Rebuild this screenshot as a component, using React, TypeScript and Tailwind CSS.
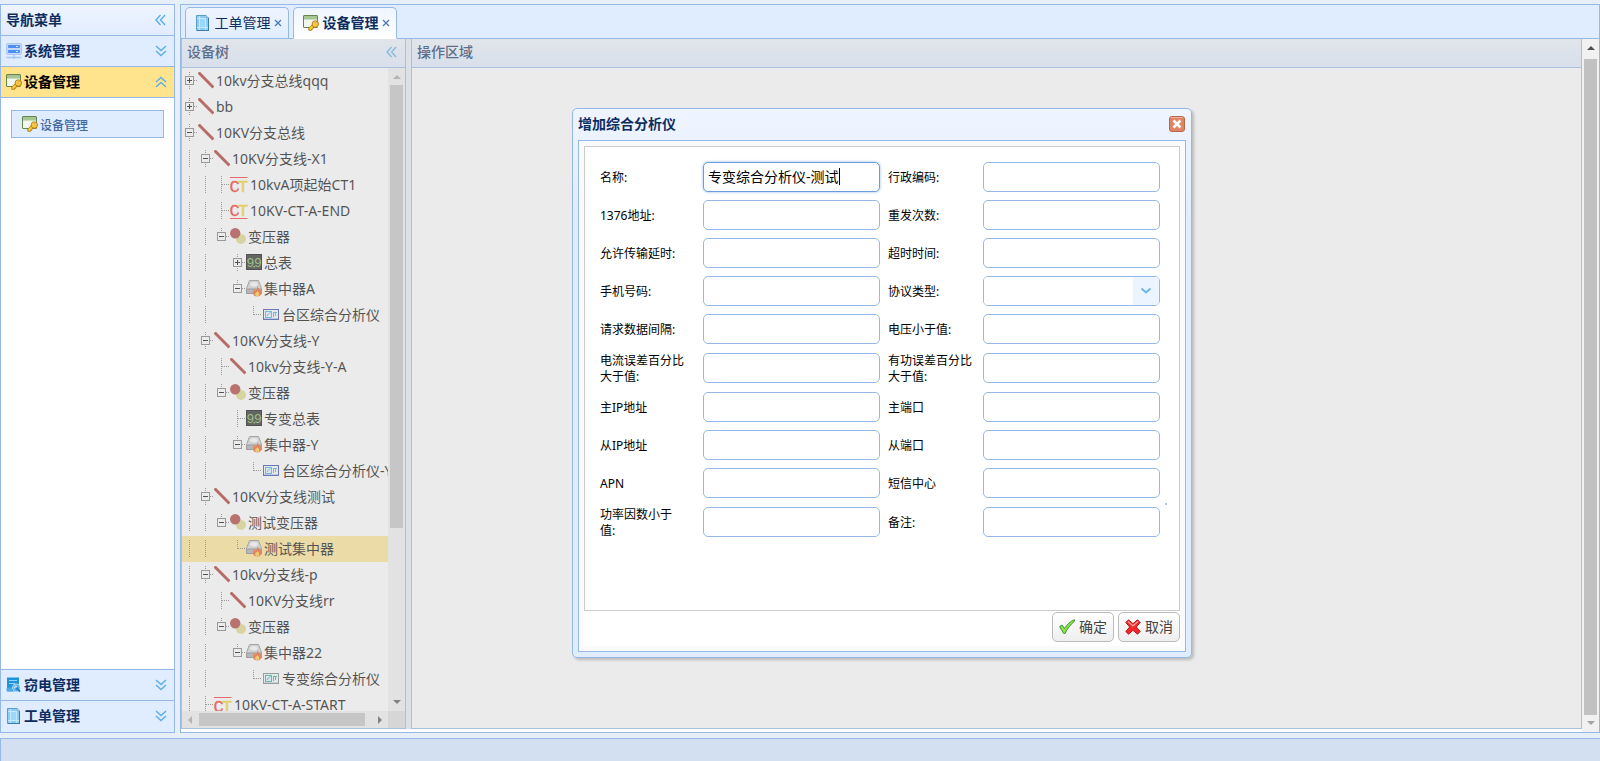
import { Fragment, type ReactNode } from "react"

type IconName = "line" | "ctTop" | "ctBottom" | "transformer" | "meter" | "drive" | "analyzer" | "analyzerGreen"

// guides: one char per 16px column
//   | vertical guide, . blank, + / - toggle that continues, P / M toggle that ends the branch,
//   t leaf with siblings below, l last leaf
type TreeRow = {
  guides: string
  icon: IconName
  text: string
  selected?: boolean
}

const treeRows: TreeRow[] = [
  { guides: "+", icon: "line", text: "10kv分支总线qqq" },
  { guides: "+", icon: "line", text: "bb" },
  { guides: "-", icon: "line", text: "10KV分支总线" },
  { guides: "|-", icon: "line", text: "10KV分支线-X1" },
  { guides: "||t", icon: "ctTop", text: "10kvA项起始CT1" },
  { guides: "||t", icon: "ctBottom", text: "10KV-CT-A-END" },
  { guides: "||M", icon: "transformer", text: "变压器" },
  { guides: "||.+", icon: "meter", text: "总表" },
  { guides: "||.M", icon: "drive", text: "集中器A" },
  { guides: "||..l", icon: "analyzer", text: "台区综合分析仪" },
  { guides: "|-", icon: "line", text: "10KV分支线-Y" },
  { guides: "||t", icon: "line", text: "10kv分支线-Y-A" },
  { guides: "||M", icon: "transformer", text: "变压器" },
  { guides: "||.t", icon: "meter", text: "专变总表" },
  { guides: "||.M", icon: "drive", text: "集中器-Y" },
  { guides: "||..l", icon: "analyzer", text: "台区综合分析仪-Y" },
  { guides: "|-", icon: "line", text: "10KV分支线测试" },
  { guides: "||M", icon: "transformer", text: "测试变压器" },
  { guides: "||.l", icon: "drive", text: "测试集中器", selected: true },
  { guides: "|-", icon: "line", text: "10kv分支线-p" },
  { guides: "||t", icon: "line", text: "10KV分支线rr" },
  { guides: "||M", icon: "transformer", text: "变压器" },
  { guides: "||.M", icon: "drive", text: "集中器22" },
  { guides: "||..l", icon: "analyzerGreen", text: "专变综合分析仪" },
  { guides: "|t", icon: "ctTop", text: "10KV-CT-A-START" },
]

type Field = { id: string; label: string; value?: string; select?: boolean }

const fields: [Field, Field][] = [
  [{ id: "name", label: "名称:", value: "专变综合分析仪-测试" }, { id: "areaCode", label: "行政编码:" }],
  [{ id: "addr1376", label: "1376地址:" }, { id: "resend", label: "重发次数:" }],
  [{ id: "delay", label: "允许传输延时:" }, { id: "timeout", label: "超时时间:" }],
  [{ id: "phone", label: "手机号码:" }, { id: "protocol", label: "协议类型:", select: true }],
  [{ id: "interval", label: "请求数据间隔:" }, { id: "voltage", label: "电压小于值:" }],
  [{ id: "current", label: "电流误差百分比大于值:" }, { id: "active", label: "有功误差百分比大于值:" }],
  [{ id: "mainIp", label: "主IP地址" }, { id: "mainPort", label: "主端口" }],
  [{ id: "subIp", label: "从IP地址" }, { id: "subPort", label: "从端口" }],
  [{ id: "apn", label: "APN" }, { id: "sms", label: "短信中心" }],
  [{ id: "factor", label: "功率因数小于值:" }, { id: "remark", label: "备注:" }],
]

const WindowKeyIcon = () => (
  <svg width="16" height="16" viewBox="0 0 16 16" className="shrink-0">
    <rect x="0.5" y="0.5" width="14" height="12" rx="0.5" fill="#f1f7ee" stroke="#64864c" />
    <rect x="1" y="1" width="13" height="3" fill="#a5c693" />
    <rect x="1" y="4" width="13" height="1" fill="#c9dfbc" />
    <path d="M10 9 5.800 13v2.300h2.700V14.200h1.400v-1.500l1.800-1" fill="#f8c93c" stroke="#b87d14" strokeWidth="0.9" />
    <circle cx="12.300" cy="9" r="3.200" fill="#fbc83c" stroke="#b87d14" strokeWidth="0.9" />
    <circle cx="13.200" cy="8.200" r="1" fill="#fff" stroke="#b87d14" strokeWidth="0.5" />
  </svg>
)

const DocIcon = () => (
  <svg width="16" height="16" viewBox="0 0 16 16" className="shrink-0">
    <path d="M1.500 0.500h9.500l2.500 2.500v12.500h-12z" fill="#8ccdf6" stroke="#5a9cc9" />
    <path d="M4.500 1v14M10.500 1v14M2 3.500h11M2 12.500h11" stroke="#c4e9fe" fill="none" />
    <path d="M5 4h5v8H5z" fill="#9ad8fb" />
    <path d="M2 15.500h12M13.500 3v12.500" stroke="#3d7ba8" />
    <path d="M11 0.500V3h2.500" fill="#dff3ff" stroke="#4a8dbc" strokeWidth="0.8" />
  </svg>
)

const ServerIcon = () => (
  <svg width="16" height="16" viewBox="0 0 16 16" className="shrink-0">
    <rect x="0.500" y="0.500" width="15" height="11" rx="1.500" fill="#c3d8fb" stroke="#abc8f7" />
    <rect x="2" y="2" width="12" height="3" rx="1" fill="#4c8ff5" />
    <rect x="2" y="7" width="12" height="3" rx="1" fill="#4c8ff5" />
    <path d="M10 3.500h2M10 8.500h2" stroke="#d9e8ff" />
    <path d="M8 12v4M0.500 14.500h15" stroke="#a3c5f7" strokeWidth="1.500" />
  </svg>
)

const InspectIcon = () => (
  <svg width="16" height="16" viewBox="0 0 16 16" className="shrink-0">
    <path d="M1 0.500h12v7.500l-4 6.500H1z" fill="#1f93dc" />
    <path d="M3 3.500h8M3 6.500h6" stroke="#9ad2f5" strokeWidth="1.200" />
    <path d="M0.500 10.500h6l-1 3.500h-5z" fill="#4aaae4" />
    <circle cx="10.300" cy="10.800" r="3.900" fill="#4fabe4" stroke="#d4e9fa" strokeWidth="0.800" />
    <path d="m10.500 11 3.500 3.500" stroke="#1f84cc" strokeWidth="2" />
    <path d="M8.300 11.500a2 2 0 0 1 2-2.500l-.5 1.500" stroke="#fff" fill="none" />
  </svg>
)

const Chevrons = ({ dir }: { dir: "left" | "up" | "down" }) => {
  const paths = {
    left: "M7.500 3 3 8l4.500 5M12 3 7.500 8l4.500 5",
    up: "M3 8l5-4.500L13 8M3 13l5-4.500L13 13",
    down: "M3 3l5 4.500L13 3M3 8l5 4.500L13 8",
  }
  return (
    <svg width="16" height="16" viewBox="0 0 16 16" fill="none" stroke="#5aaeea" strokeWidth="1.400" className="shrink-0">
      <path d={paths[dir]} />
    </svg>
  )
}

const Guide = ({ kind }: { kind: string }) => {
  const toggle = "+-PM".includes(kind)
  const svg = (
    <svg width="16" height="18" viewBox="0 0 16 18" shapeRendering="crispEdges" className="block">
      {kind !== "." && (
        <path
          d={"MPl".includes(kind) ? "M7.500 0v9" : "M7.500 0v18"}
          stroke="#777"
          strokeDasharray="1 1"
        />
      )}
      {kind !== "|" && kind !== "." && <path d="M8 8.500h8" stroke="#777" strokeDasharray="1 1" />}
      {toggle && (
        <>
          <rect x="3.500" y="4.500" width="8" height="8" fill="#fff" stroke="#777" />
          <path d="M5 8.500h5" stroke="#000" />
          {"+P".includes(kind) && <path d="M7.500 6v5" stroke="#000" />}
        </>
      )}
    </svg>
  )
  return toggle ? (
    <button type="button" aria-label="展开或折叠" className="mt-1 h-[18px] w-4 shrink-0">{svg}</button>
  ) : (
    <span className="mt-1 h-[18px] w-4 shrink-0">{svg}</span>
  )
}

const Ct = ({ bottom }: { bottom?: boolean }) => (
  <svg width="18" height="18" viewBox="0 0 18 18" className="mt-1 shrink-0 overflow-visible">
    <path d={bottom ? "M0 16.500h17.500" : "M0 1.500h17.500"} stroke="#f52a2a" />
    <text x="-0.500" y={bottom ? 14 : 16} fontSize="17" fontFamily="Liberation Mono" fill="#f51f1f" stroke="#f51f1f" strokeWidth="0.300">C</text>
    <text x="8" y={bottom ? 14 : 16} fontSize="17" fontFamily="Liberation Mono" fill="#f0d41a" stroke="#f0d41a" strokeWidth="0.600">T</text>
  </svg>
)

const Analyzer = ({ frame, ink }: { frame: string; ink: string }) => (
  <svg width="18" height="18" viewBox="0 0 18 18" className="mt-1 shrink-0">
    <rect x="1.500" y="3.500" width="15" height="10" fill="#f4fbff" stroke={frame} />
    <path d="M2 13h14" stroke={frame} strokeOpacity="0.600" />
    <rect x="3.500" y="5.500" width="6" height="6" fill="#e6f6fd" stroke={ink} />
    <path d="m5 10 1.500-2 2-1.500" stroke={ink} fill="none" />
    <path d="M11.500 6v5M13.500 6v4M11 6.500h4" stroke={ink} />
  </svg>
)

const NodeIcon = ({ name }: { name: IconName }) => {
  switch (name) {
    case "ctTop":
      return <Ct />
    case "ctBottom":
      return <Ct bottom />
    case "analyzer":
      return <Analyzer frame="#2c3fae" ink="#35b0dd" />
    case "analyzerGreen":
      return <Analyzer frame="#6f8080" ink="#1fb08e" />
    case "line":
      return (
        <svg width="16" height="18" viewBox="0 0 16 18" className="mt-1 shrink-0">
          <path d="M0.500 0.500 15.500 15.500" stroke="#a82c26" strokeWidth="3" />
        </svg>
      )
    case "transformer":
      return (
        <svg width="16" height="18" viewBox="0 0 16 18" className="mt-1 shrink-0">
          <circle cx="11" cy="11" r="5" fill="#e0d984" />
          <circle cx="5.200" cy="5.200" r="5.200" fill="#ab3833" />
        </svg>
      )
    case "meter":
      return (
        <svg width="16" height="18" viewBox="0 0 16 18" className="mt-1 shrink-0">
          <rect x="0.500" y="0.500" width="15" height="15" fill="#1d211d" stroke="#000" />
          <text x="0.500" y="13" fontSize="13" fontFamily="Liberation Mono" fill="#7fb558">9</text>
          <text x="8" y="13" fontSize="13" fontFamily="Liberation Mono" fill="#7fb558">9</text>
          <rect x="7.500" y="12" width="1.500" height="1.500" fill="#7fb558" />
        </svg>
      )
    case "drive":
      return (
        <svg width="16" height="18" viewBox="0 0 16 18" className="mt-1 shrink-0">
          <path d="M3.500 0.500h9l3 8v5h-15v-5z" fill="#d6d6d6" stroke="#8c8c8c" />
          <ellipse cx="8" cy="4.300" rx="4.200" ry="2.700" fill="#fafafa" stroke="#bcbcbc" strokeWidth="0.600" />
          <path d="M0.500 9h15v4.500h-15z" fill="#a9a9a9" stroke="#7d7d7d" />
          <path d="M11.500 5.500c0 3 4 4 4 7.500 0 2.300-2 3.500-4.200 3.500S7 15.200 7 13c0-1.800 1-2.600 1.400-4 .8.500 1.200 1.200 1.300 2 1-1.500 1.600-3 1.800-5.500z" fill="#f0560f" />
          <path d="M11.500 10.500c.3 1.500 1.800 2 1.800 3.700 0 1.200-.9 2-2 2s-2.200-.8-2.200-2c0-.9.600-1.400 1-2 .9.200 1.300-.7 1.400-1.700z" fill="#ffc73a" />
        </svg>
      )
  }
}

const NavHeader = ({ icon, children, active, last }: { icon: ReactNode; children: ReactNode; active?: boolean; last?: boolean }) => (
  <button
    type="button"
    className={`flex w-full shrink-0 items-center gap-0.5 px-[5px] text-sm font-bold ${
      last ? "h-[30px]" : "h-[31px] border-b border-[#95b8e7]"
    } ${active ? "bg-[#ffe48d] text-black" : "bg-[#e0ecff] text-[#0e2d5f]"}`}
  >
    {icon}
    <span className="flex-1 text-left">{children}</span>
    <Chevrons dir={active ? "up" : "down"} />
  </button>
)

const Sidebar = () => (
  <nav className="flex w-[175px] shrink-0 flex-col border border-[#95b8e7] bg-[#e0ecff]">
    <div className="flex h-[31px] shrink-0 items-center justify-between border-b border-[#95b8e7] bg-linear-to-b from-[#eff5ff] to-[#e0ecff] px-[5px] text-sm font-bold text-[#0e2d5f]">
      导航菜单
      <Chevrons dir="left" />
    </div>
    <NavHeader icon={<ServerIcon />}>系统管理</NavHeader>
    <NavHeader icon={<WindowKeyIcon />} active>设备管理</NavHeader>
    <div className="flex-1 bg-white px-2.5 pt-3">
      <a href="#device" className="flex h-7 items-center gap-0.5 border border-[#95b8e7] bg-[#e0ecff] px-2.5 text-xs font-medium text-[#416aa3]">
        <WindowKeyIcon />
        <span className="pt-1">设备管理</span>
      </a>
    </div>
    <div className="border-t border-[#95b8e7] pb-px">
      <NavHeader icon={<InspectIcon />}>窃电管理</NavHeader>
      <NavHeader icon={<DocIcon />} last>工单管理</NavHeader>
    </div>
  </nav>
)

const Tab = ({ icon, label, active }: { icon: ReactNode; label: string; active?: boolean }) => (
  <div
    className={`flex w-[104px] items-center gap-0.5 rounded-t-[5px] border border-[#95b8e7] pr-1.5 pl-[9px] text-sm text-[#0e2d5f] ${
      active ? "-mb-px border-b-white bg-linear-to-b from-[#eff5ff] to-white font-bold" : "border-b-0 bg-linear-to-b from-[#eff5ff] to-[#e0ecff]"
    }`}
  >
    {icon}
    <button type="button" className="flex-1 whitespace-nowrap">{label}</button>
    <button type="button" aria-label={`关闭${label}`}>
      <svg width="8" height="8" viewBox="0 0 8 8" stroke="#4a79b8" strokeWidth="1.300">
        <path d="m1 1 6 6M7 1 1 7" />
      </svg>
    </button>
  </div>
)

const PanelHeader = ({ children }: { children: ReactNode }) => (
  <div className="flex h-[29px] shrink-0 items-center justify-between border-b border-[#95b8e7] bg-linear-to-b from-[#eff5ff] to-[#e0ecff] px-[5px] pb-[3px] text-sm font-medium text-[#0e2d5f]">
    {children}
  </div>
)

const Arrow = ({ dir, color }: { dir: "up" | "down" | "left" | "right"; color: string }) => {
  const d = { up: "M0 6h8L4 2z", down: "M0 2h8L4 6z", left: "M6 0v8L2 4z", right: "M2 0v8l4-4z" }
  return (
    <svg width="8" height="8" viewBox="0 0 8 8" fill={color} className="shrink-0">
      <path d={d[dir]} />
    </svg>
  )
}

const TreePanel = () => (
  <section className="flex w-[225px] shrink-0 flex-col border border-t-0 border-[#95b8e7] bg-white">
    <PanelHeader>
      设备树
      <Chevrons dir="left" />
    </PanelHeader>
    <div className="flex min-h-0 flex-1">
      <ul className="min-w-0 flex-1 overflow-hidden">
        {treeRows.map((row, i) => (
          <li key={i} className={`flex h-[26px] whitespace-nowrap ${row.selected ? "bg-[#ffe48d]" : ""}`}>
            {row.guides.split("").map((kind, n) => (
              <Guide key={n} kind={kind} />
            ))}
            <NodeIcon name={row.icon} />
            <span className="pl-0.5 text-sm leading-[26px]">{row.text}</span>
          </li>
        ))}
      </ul>
      <div className="flex w-[17px] shrink-0 flex-col items-center bg-[#f1f1f1] py-[5px]">
        <Arrow dir="up" color="#a3a3a3" />
        <div className="mt-1 h-[443px] w-[13px] bg-[#c1c1c1]" />
        <div className="flex-1" />
        <Arrow dir="down" color="#505050" />
      </div>
    </div>
    <div className="flex h-[17px] shrink-0 bg-[#dcdcdc]">
      <div className="flex flex-1 items-center bg-[#f1f1f1] px-1">
        <Arrow dir="left" color="#a3a3a3" />
        <div className="ml-[5px] h-[13px] w-[166px] bg-[#c1c1c1]" />
        <div className="flex-1" />
        <Arrow dir="right" color="#505050" />
      </div>
      <div className="w-[17px]" />
    </div>
  </section>
)

const FieldInput = ({ field }: { field: Field }) => {
  if (field.select) {
    return (
      <div className="relative flex h-[30px] overflow-hidden rounded-[5px] border border-[#95b8e7]">
        <select id={field.id} className="w-full appearance-none bg-white px-1 text-sm outline-none">
          <option value=""></option>
        </select>
        <span className="pointer-events-none absolute inset-y-0 right-0 flex w-[26px] items-center justify-center bg-[#ecf4ff]">
          <svg width="12" height="12" viewBox="0 0 12 12" fill="none" stroke="#6cb8ec" strokeWidth="2">
            <path d="m1.500 3.500 4.500 4 4.500-4" />
          </svg>
        </span>
      </div>
    )
  }
  return (
    <div className="relative">
      <input
        id={field.id}
        type="text"
        defaultValue={field.value}
        className={`block h-[30px] w-full rounded-[5px] border bg-white px-1 pb-0.5 text-sm outline-none ${
          field.value ? "border-[#6b9cde] shadow-[0_0_3px_0_#95b8e7]" : "border-[#95b8e7]"
        }`}
      />
      {field.value && <span className="absolute top-1.5 left-[136px] h-[17px] w-px bg-black" />}
    </div>
  )
}

const DialogButton = ({ icon, children }: { icon: ReactNode; children: ReactNode }) => (
  <button
    type="button"
    className="flex h-[30px] w-[62px] items-center justify-center gap-1 rounded-[5px] border border-[#bbb] bg-linear-to-b from-white to-[#eee] text-sm text-[#444]"
  >
    {icon}
    {children}
  </button>
)

const Dialog = () => (
  <div
    role="dialog"
    aria-labelledby="dialog-title"
    className="w-[620px] rounded-[5px] border border-[#95b8e7] bg-linear-to-b from-[#eff5ff] to-[#e0ecff] to-20% p-[5px] shadow-[2px_2px_3px_#bbb]"
  >
    <div className="flex h-[26px] items-start justify-between pr-px">
      <h2 id="dialog-title" className="text-sm font-bold text-[#0e2d5f]">增加综合分析仪</h2>
      <button type="button" aria-label="关闭" className="pt-0.5">
        <svg width="16" height="16" viewBox="0 0 16 16">
          <rect x="0.500" y="0.500" width="15" height="15" rx="2.500" fill="#df8566" stroke="#b9674b" />
          <path d="M2 1.500h12" stroke="#f0b49c" />
          <path d="m4.500 4.500 7 7M11.500 4.500l-7 7" stroke="#fff" strokeWidth="2.600" />
        </svg>
      </button>
    </div>
    <div className="border border-[#95b8e7] bg-[#fafafa] p-[5px]">
      <form className="relative h-[465px] border border-[#ccc] bg-white pt-[11px] pl-[15px] text-xs">
        <div className="grid grid-cols-[103px_177px_103px_177px]">
          {fields.map(([left, right]) => (
            <Fragment key={left.id}>
              <label htmlFor={left.id} className="flex w-[86px] items-center pt-[5px] pb-[3px]">{left.label}</label>
              <div className="flex flex-col justify-center py-1"><FieldInput field={left} /></div>
              <label htmlFor={right.id} className="ml-2 flex w-[86px] items-center pt-[5px] pb-[3px]">{right.label}</label>
              <div className="flex flex-col justify-center py-1"><FieldInput field={right} /></div>
            </Fragment>
          ))}
        </div>
        <span className="absolute right-3 bottom-[105px] size-0.5 bg-[#a3c6ee]" />
      </form>
      <div className="flex h-[35px] items-start justify-end gap-1 bg-white pt-px">
        <DialogButton
          icon={
            <svg width="16" height="16" viewBox="0 0 16 16">
              <path d="M0.700 7.500 3 6l2.500 3.500C8 5.500 11 2.500 15.300 0.700l.2 1.500C11.500 5.500 8 10 6 14.500L4.500 14.300z" fill="#8de04a" stroke="#2f8d2c" strokeWidth="0.900" />
            </svg>
          }
        >
          确定
        </DialogButton>
        <DialogButton
          icon={
            <svg width="16" height="16" viewBox="0 0 16 16">
              <path d="M3.500 0.800 8 4.700l4.500-3.900 2.700 2.700L11.300 8l3.900 4.500-2.700 2.700L8 11.300l-4.500 3.900-2.700-2.700L4.700 8 0.800 3.500z" fill="#f02a2a" stroke="#b51616" strokeWidth="1" strokeLinejoin="round" />
              <path d="m3 2.500 5 4.300 5-4.300" stroke="#ff9c9c" strokeWidth="1.300" fill="none" />
            </svg>
          }
        >
          取消
        </DialogButton>
      </div>
    </div>
  </div>
)

const App = () => (
  <div className="flex h-screen flex-col bg-[#e6eef8] pt-1 font-['Noto_Sans','Noto_Sans_CJK_SC',sans-serif] text-black">
    <div className="flex min-h-0 flex-1 gap-[5px]">
      <Sidebar />
      <main className="flex min-w-0 flex-1 flex-col border border-[#95b8e7] bg-white">
        <div className="flex h-[34px] shrink-0 gap-1 border-b border-[#95b8e7] bg-[#e0ecff] px-1 pt-0.5">
          <Tab icon={<DocIcon />} label="工单管理" />
          <Tab icon={<WindowKeyIcon />} label="设备管理" active />
        </div>
        <div className="flex min-h-0 flex-1">
          <div className="relative mb-[3px] flex min-w-0 flex-1 gap-[5px] bg-[#e6eef8]">
            <TreePanel />
            <section className="flex min-w-0 flex-1 flex-col border border-t-0 border-[#95b8e7] bg-white">
              <PanelHeader>操作区域</PanelHeader>
            </section>
            {/* modal mask */}
            <div className="absolute inset-0 flex items-center justify-center bg-[#ccc]/40 pb-0.5 pl-px">
              <Dialog />
            </div>
          </div>
          <div className="flex w-[17px] shrink-0 flex-col items-center bg-[#f1f1f1] py-[5px]">
            <Arrow dir="up" color="#505050" />
            <div className="mt-[7px] mb-1 w-[13px] flex-1 bg-[#c1c1c1]" />
            <Arrow dir="down" color="#a3a3a3" />
          </div>
        </div>
      </main>
    </div>
    <footer className="mt-[5px] h-[23px] shrink-0 border-t border-l border-[#95b8e7] bg-[#d2e0f2]" />
  </div>
)

export default App
